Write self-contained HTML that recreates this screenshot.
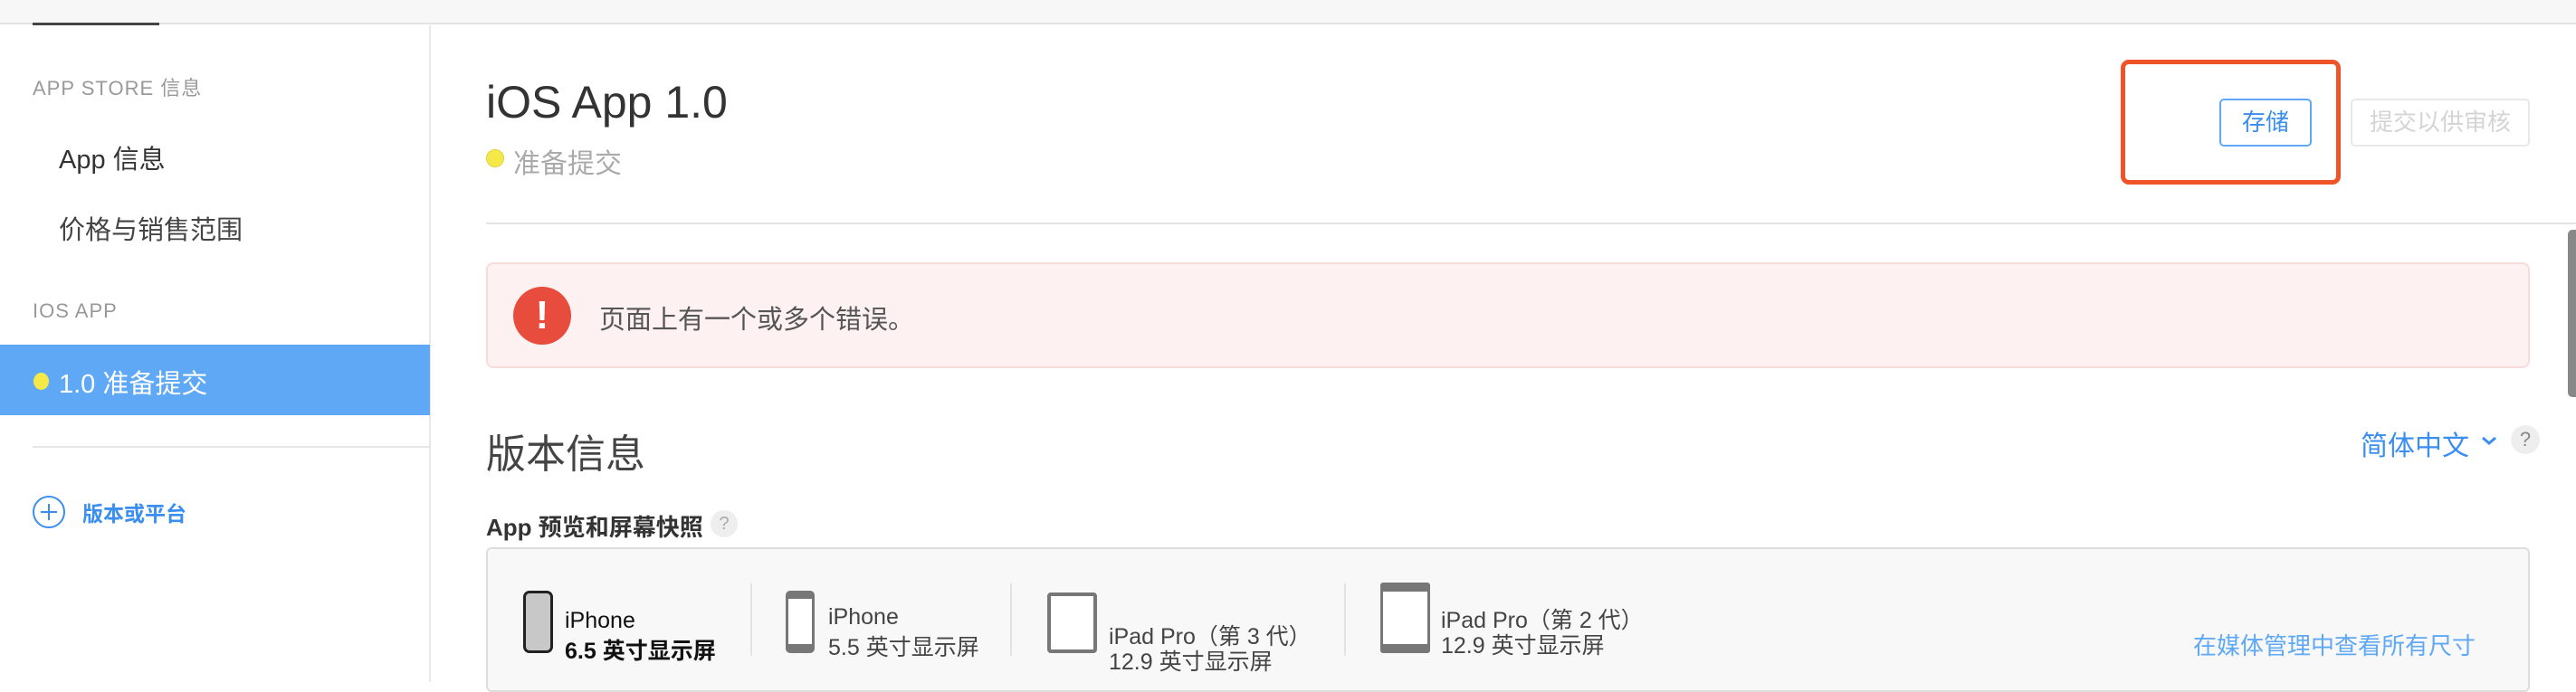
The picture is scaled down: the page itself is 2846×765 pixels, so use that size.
<!DOCTYPE html>
<html><head><meta charset="utf-8"><style>
*{margin:0;padding:0;box-sizing:border-box}
body{width:2846px;height:754px;overflow:hidden;background:#fff;font-family:"Liberation Sans","Noto Sans CJK SC",sans-serif;position:relative;color:#333}
.a{position:absolute;white-space:nowrap}
</style></head><body>
<div class="a" style="left:0;top:0;width:2846px;height:27px;background:#f7f7f7;border-bottom:2px solid #e3e3e3"></div>
<div class="a" style="left:36px;top:25px;width:140px;height:3px;background:#444"></div>
<div class="a" style="left:474px;top:28px;width:2px;height:726px;background:#e8e8e8"></div>
<div class="a" style="left:36px;top:80px;font-size:22px;color:#999;letter-spacing:1px">APP STORE 信息</div>
<div class="a" style="left:65px;top:153px;font-size:29px;color:#333">App 信息</div>
<div class="a" style="left:65px;top:231px;font-size:29px;color:#444">价格与销售范围</div>
<div class="a" style="left:36px;top:331px;font-size:22px;color:#999;letter-spacing:1px">IOS APP</div>
<div class="a" style="left:0;top:381px;width:475px;height:78px;background:#5ea8f5"></div>
<div class="a" style="left:37px;top:412px;width:17px;height:19px;border-radius:50%;background:#f5e94a"></div>
<div class="a" style="left:65px;top:401px;font-size:29px;color:#fff">1.0 准备提交</div>
<div class="a" style="left:36px;top:493px;width:440px;height:2px;background:#e6e6e6"></div>
<div class="a" style="left:36px;top:548px;width:36px;height:36px;border:2px solid #3a8ef0;border-radius:50%"></div>
<div class="a" style="left:45px;top:565px;width:18px;height:2px;background:#3a8ef0"></div>
<div class="a" style="left:53px;top:557px;width:2px;height:18px;background:#3a8ef0"></div>
<div class="a" style="left:91px;top:549px;font-size:23px;color:#3a8ef0;font-weight:bold">版本或平台</div>

<div class="a" style="left:537px;top:84px;font-size:50px;color:#333">iOS App 1.0</div>
<div class="a" style="left:537px;top:165px;width:20px;height:20px;border-radius:50%;background:#f5e94a;border:1px solid #e0d23a"></div>
<div class="a" style="left:567px;top:156px;font-size:30px;color:#aaa">准备提交</div>
<div class="a" style="left:2452px;top:109px;width:102px;height:53px;border:2px solid #5ea8f5;border-radius:5px;font-size:26px;color:#3a8ef0;text-align:center;line-height:49px">存储</div>
<div class="a" style="left:2597px;top:109px;width:198px;height:53px;border:2px solid #e8e8e8;border-radius:5px;font-size:26px;color:#d4d4d4;text-align:center;line-height:49px">提交以供审核</div>
<div class="a" style="left:2343px;top:66px;width:243px;height:138px;border:5px solid #ee5428;border-radius:9px"></div>
<div class="a" style="left:537px;top:246px;width:2309px;height:2px;background:#e3e3e3"></div>
<div class="a" style="left:2837px;top:254px;width:9px;height:185px;background:#888;border-radius:5px 0 0 5px"></div>

<div class="a" style="left:537px;top:290px;width:2258px;height:117px;background:#fdf2f1;border:2px solid #f8dcda;border-radius:8px"></div>
<div class="a" style="left:567px;top:317px;width:64px;height:64px;border-radius:50%;background:#e74c3c;color:#fff;font-size:44px;font-weight:bold;text-align:center;line-height:64px">!</div>
<div class="a" style="left:662px;top:330px;font-size:29px;color:#555">页面上有一个或多个错误。</div>

<div class="a" style="left:537px;top:466px;font-size:44px;color:#444">版本信息</div>
<div class="a" style="left:2608px;top:468px;font-size:30px;color:#3a8ef0">简体中文</div>
<svg class="a" style="left:2740px;top:480px" width="20" height="14" viewBox="0 0 20 14"><path d="M3 4 L10 10 L17 4" fill="none" stroke="#3a8ef0" stroke-width="3"/></svg>
<div class="a" style="left:2774px;top:470px;width:32px;height:32px;border-radius:50%;background:#eee;color:#888;font-size:22px;text-align:center;line-height:32px">?</div>
<div class="a" style="left:537px;top:563px;font-size:26px;color:#333;font-weight:bold">App 预览和屏幕快照</div>
<div class="a" style="left:785px;top:564px;width:30px;height:30px;border-radius:50%;background:#eee;color:#aaa;font-size:20px;text-align:center;line-height:30px">?</div>

<div class="a" style="left:537px;top:605px;width:2258px;height:160px;background:#f8f8f8;border:2px solid #ddd;border-radius:6px"></div>
<div class="a" style="left:578px;top:653px;width:33px;height:69px;border:3px solid #222;border-radius:7px;background:#c8c8c8"></div>
<div class="a" style="left:624px;top:672px;font-size:25px;color:#111">iPhone</div>
<div class="a" style="left:624px;top:700px;font-size:25px;color:#111;font-weight:bold">6.5 英寸显示屏</div>
<div class="a" style="left:829px;top:645px;width:2px;height:80px;background:#e3e3e3"></div>
<div class="a" style="left:868px;top:653px;width:32px;height:69px;border:3px solid #777;border-top-width:9px;border-bottom-width:10px;border-radius:5px;background:#fff"></div>
<div class="a" style="left:915px;top:668px;font-size:25px;color:#444">iPhone</div>
<div class="a" style="left:915px;top:696px;font-size:25px;color:#444">5.5 英寸显示屏</div>
<div class="a" style="left:1116px;top:645px;width:2px;height:80px;background:#e3e3e3"></div>
<div class="a" style="left:1157px;top:655px;width:55px;height:67px;border:4px solid #777;border-radius:4px;background:#fff"></div>
<div class="a" style="left:1225px;top:684px;font-size:25px;color:#444">iPad Pro（第 3 代）</div>
<div class="a" style="left:1225px;top:712px;font-size:25px;color:#444">12.9 英寸显示屏</div>
<div class="a" style="left:1485px;top:645px;width:2px;height:80px;background:#e3e3e3"></div>
<div class="a" style="left:1525px;top:644px;width:55px;height:78px;border:3px solid #777;border-top-width:10px;border-bottom-width:10px;border-radius:3px;background:#fff"></div>
<div class="a" style="left:1592px;top:666px;font-size:25px;color:#444">iPad Pro（第 2 代）</div>
<div class="a" style="left:1592px;top:694px;font-size:25px;color:#444">12.9 英寸显示屏</div>
<div class="a" style="left:2423px;top:694px;font-size:26px;color:#5ea8f5">在媒体管理中查看所有尺寸</div>
</body></html>
